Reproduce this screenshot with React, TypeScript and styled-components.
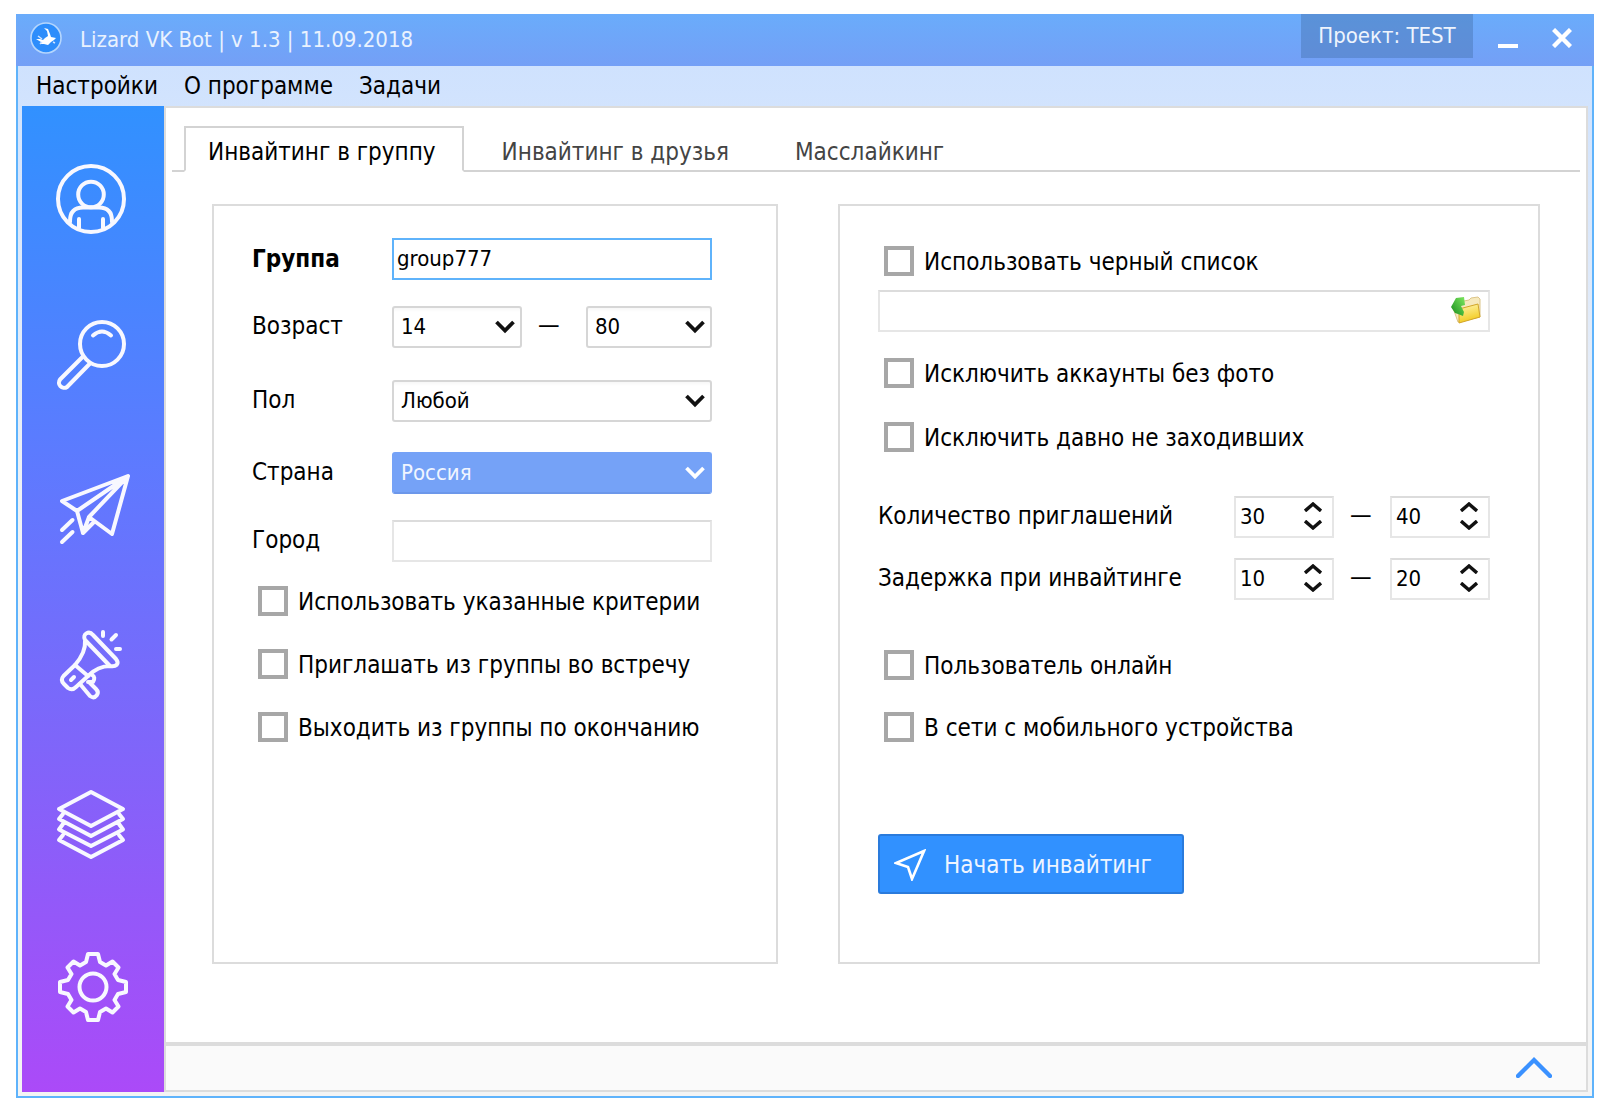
import React, { useState } from "react";
import styled, { createGlobalStyle, css } from "styled-components";

const GlobalStyle = createGlobalStyle`
  *, *::before, *::after { box-sizing: border-box; }
  body { margin: 0; background: #ffffff; }
  body, button, input, select {
    font-family: "DejaVu Sans Condensed", "DejaVu Sans", sans-serif;
    font-size: 24px;
    line-height: 32px;
    color: #000000;
  }
  button { border: 0; padding: 0; background: none; cursor: pointer; }
`;

const line = "#dcdcdc";
const accent = "#3191ff";
const frame = "#5fb3fb";

/* ---------- window shell ---------- */

const Desktop = styled.div`
  display: flex;
  min-height: 100vh;
  padding: 14px 18px 12px 16px;
`;

const Window = styled.div`
  flex: 1;
  display: flex;
  flex-direction: column;
  min-width: 0;
`;

const TitleBar = styled.header`
  display: flex;
  align-items: center;
  gap: 16px;
  height: 52px;
  padding: 0 13px 4px 14px;
  background: linear-gradient(#6aacfb, #749ff6);
  color: #ffffff;
`;

const Title = styled.h1`
  flex: 1;
  margin: 0;
  padding: 4px 0 0 2px;
  font-size: 22px;
  font-weight: 400;
  color: #e9f2fe;
`;

const Project = styled.button`
  align-self: flex-start;
  width: 172px;
  height: 44px;
  background: rgba(70, 115, 175, 0.45);
  color: #eef4fd;
  font-size: 22px;
`;

const WindowButton = styled.button`
  display: flex;
  align-items: center;
  justify-content: center;
  width: 38px;
  height: 44px;
`;

const Body = styled.div`
  flex: 1;
  display: flex;
  flex-direction: column;
  padding: 0 4px 4px;
  border: 2px solid ${frame};
  border-top: 0;
  background: linear-gradient(#cfe2fe, #f4f4f4 50%);
`;

const MenuBar = styled.nav`
  display: flex;
  align-items: center;
  gap: 26px;
  height: 40px;
  padding: 0 14px;
`;

const MenuItem = styled.button`
  white-space: nowrap;
`;

const Main = styled.div`
  flex: 1;
  display: flex;
`;

/* ---------- side bar ---------- */

const Sidebar = styled.nav`
  display: grid;
  grid-template-rows: 156px 154px 156px 160px 162px auto;
  justify-content: center;
  width: 142px;
  padding: 58px 4px 0 0;
  background: linear-gradient(#3191ff, #5c7bff 35%, #7e66fa 64%, #ab4af8);
`;

const SideButton = styled.button`
  display: flex;
  width: 70px;
  height: 70px;
`;

const OutlineSvg = styled.svg`
  overflow: visible;
`;

/* ---------- workspace ---------- */

const Workspace = styled.main`
  flex: 1;
  display: flex;
  flex-direction: column;
  min-width: 0;
  border: 2px solid ${line};
  background: #ffffff;
`;

const Tabs = styled.div`
  display: flex;
  gap: 14px;
  margin: 18px 6px 0;
  padding-left: 12px;
  border-bottom: 2px solid #d3d3d3;
`;

const Tab = styled.button<{ $active?: boolean }>`
  height: 46px;
  margin-bottom: -2px;
  padding: 6px 26px 0 22px;
  border: 2px solid transparent;
  color: #444444;
  white-space: nowrap;
  ${(p) =>
    p.$active &&
    css`
      border-color: #d3d3d3 #d3d3d3 #ffffff;
      background: #ffffff;
      color: #000000;
    `}
`;

const Columns = styled.div`
  flex: 1;
  display: grid;
  grid-template-columns: 566fr 702fr;
  gap: 60px;
  padding: 32px 46px 78px;
`;

const CriteriaPanel = styled.section`
  padding: 32px 64px 32px 38px;
  border: 2px solid ${line};
`;

const OptionsPanel = styled.section`
  padding: 40px 48px 40px 38px;
  border: 2px solid ${line};
`;

const Footer = styled.footer`
  display: flex;
  align-items: center;
  justify-content: flex-end;
  height: 48px;
  padding: 4px 34px 0 0;
  border-top: 4px solid ${line};
  background: #fafafa;
`;

/* ---------- form parts ---------- */

const Fields = styled.div`
  display: grid;
  grid-template-columns: 140px 1fr;
  grid-template-rows: 68px 74px 72px 68px 42px;
`;

const FieldLabel = styled.label<{ $bold?: boolean }>`
  line-height: ${(p) => (p.$bold ? 42 : 40)}px;
  font-weight: ${(p) => (p.$bold ? 700 : 400)};
`;

const boxed = css`
  width: 100%;
  height: 42px;
  outline: 0;
  font-size: 22px;
`;

const TextInput = styled.input<{ $focused?: boolean }>`
  ${boxed}
  padding: 0 3px 2px;
  border: 2px solid #e6e6e6;
  border-top-color: ${line};
  background: #ffffff;
  ${(p) => p.$focused && css`border-color: ${frame};`}
`;

const SelectBox = styled.div<{ $width?: number }>`
  position: relative;
  width: ${(p) => (p.$width ? `${p.$width}px` : "100%")};
  height: 42px;
`;

const NativeSelect = styled.select<{ $selected?: boolean }>`
  ${boxed}
  appearance: none;
  padding: 0 36px 0 7px;
  border: 2px solid #d6d6d6;
  border-radius: 3px;
  background: linear-gradient(#f7f7f7, #ffffff 4px);
  ${(p) =>
    p.$selected &&
    css`
      border-color: #75a2f7 #75a2f7 #6c97ea;
      background: #75a2f7;
      color: #f0f5ff;
    `}
`;

const SelectArrow = styled.svg`
  position: absolute;
  top: 13px;
  right: 7px;
  pointer-events: none;
`;

const Range = styled.div`
  display: grid;
  grid-template-columns: 130px 1fr 126px;
  line-height: 38px;
`;

const CheckList = styled.div<{ $gap: number }>`
  display: flex;
  flex-direction: column;
  gap: ${(p) => p.$gap}px;
  padding-left: 6px;
`;

const CriteriaChecks = styled(CheckList)`
  margin-top: 24px;
`;

const CheckLabel = styled.label`
  display: flex;
  align-items: flex-start;
  gap: 10px;
  height: 30px;
  line-height: 32px;
  white-space: nowrap;
`;

const CheckInput = styled.input`
  appearance: none;
  flex: none;
  width: 30px;
  height: 30px;
  margin: 0;
  border: 4px solid #a7a7a7;
  background: #ffffff;
  &:checked { background: ${accent}; box-shadow: inset 0 0 0 4px #ffffff; }
`;

const FileRow = styled.div`
  position: relative;
  margin: 14px 0 26px;
`;

const BrowseButton = styled.button`
  position: absolute;
  top: 6px;
  right: 8px;
  display: flex;
`;

const Amounts = styled.div`
  display: grid;
  gap: 20px;
  margin: 44px 0 50px;
`;

const AmountRow = styled.div`
  display: grid;
  grid-template-columns: 1fr 100px 56px 100px;
  height: 42px;
  line-height: 38px;
`;

const AmountLabel = styled.label`
  line-height: 40px;
`;

const Dash = styled.span`
  padding-left: 16px;
`;

const SpinBox = styled.div`
  display: flex;
  height: 42px;
  border: 2px solid #e6e6e6;
  border-top-color: ${line};
`;

const SpinInput = styled.input`
  flex: 1;
  width: 0;
  padding: 0 0 0 4px;
  border: 0;
  outline: 0;
  background: none;
  font-size: 22px;
  appearance: textfield;
  &::-webkit-inner-spin-button, &::-webkit-outer-spin-button { appearance: none; margin: 0; }
`;

const SpinButtons = styled.div`
  display: flex;
  flex-direction: column;
  gap: 8px;
  padding: 4px 10px 0 0;
`;

const SpinButton = styled.button`
  display: flex;
`;

const StartButton = styled.button`
  display: flex;
  align-items: center;
  gap: 18px;
  height: 60px;
  margin-top: 92px;
  padding: 2px 30px 0 14px;
  border: 2px solid #2a7bdc;
  border-radius: 3px;
  background: ${accent};
  color: #eef5ff;
`;

/* ---------- drawings ---------- */

const Outline = ({ shift = 0, children }: { shift?: number; children: React.ReactNode }) => (
  <OutlineSvg
    width="70"
    height="70"
    viewBox={`${-shift} 0 70 70`}
    fill="none"
    stroke="#f8f8ff"
    strokeWidth="4"
    strokeLinecap="round"
    strokeLinejoin="round"
    aria-hidden="true"
  >
    {children}
  </OutlineSvg>
);

const AccountIcon = () => (
  <Outline>
    <circle cx="35" cy="35" r="33" />
    <circle cx="35" cy="30.5" r="12.8" />
    <path d="M14 58v-1Q14 43.500 27 43.500H43Q56 43.500 56 57v1M23 55v9M47 55v9" />
  </Outline>
);

const SearchIcon = () => (
  <Outline>
    <circle cx="46" cy="24" r="22" />
    <path d="M37 15.500Q46 7.500 55 15.500" />
    <path d="M27 36.500L4 59.500A5.200 5.200 0 0 0 11 67L34 43.500" />
  </Outline>
);

const PlaneIcon = () => (
  <Outline shift={4}>
    <path d="M68 2L2 27L17 37L23 59L29 43L52 60ZM17 37L68 2L29 43M23 59L33 49" />
    <path d="M2 56L12.500 46M2 68L12.500 58" />
  </Outline>
);

const MegaphoneIcon = () => (
  <Outline shift={4}>
    <path d="M25 10C22 4 29 0 33 5L56 29C60 34 56 37 50 36ZM25 11Q26 22 15 35M50 36Q38 36 28 46" />
    <path d="M15 35L3.500 46Q0 50 4 54L8 58Q12 61 16 57L28 46ZM11 50L14 47" />
    <path d="M20 54L30 66Q34 69 37 65Q39 62 36 59L29 52M32 45Q36 47 33 52L28 52" />
    <path d="M43 2V6M56 5L51.500 9.500M56 19H60" />
  </Outline>
);

const LayersIcon = () => (
  <Outline>
    <path d="M35 2L67 19L35 36L3 19Z" />
    <path d="M7 24L3 29L35 46L67 29L63 24M7 34L3 39.500L35 56L67 39.500L63 34M7 45L3 50L35 67L67 50L63 45" />
  </Outline>
);

const gearQuarter: [number, number][] = [
  [30, 2], [40, 2], [42, 10], [48, 13.5], [54.5, 9.5], [60.5, 15.5], [56.5, 22], [60, 28],
];

const gearPath = () => {
  const points: string[] = [];
  let quarter = gearQuarter;
  for (let i = 0; i < 4; i += 1) {
    quarter.forEach(([x, y]) => points.push(`${x} ${y}`));
    quarter = quarter.map(([x, y]) => [70 - y, x] as [number, number]);
  }
  return `M${points.join("L")}Z`;
};

const GearIcon = () => (
  <Outline shift={2}>
    <path d={gearPath()} />
    <circle cx="35" cy="35" r="13.500" />
  </Outline>
);

const LogoIcon = () => (
  <svg width="32" height="32" viewBox="0 0 32 32" aria-hidden="true">
    <circle cx="16" cy="16" r="15" fill="#2d8dfb" stroke="#b5d6fd" strokeWidth="1.600" />
    <path
      d="M14 6L18 7L20 12L21 15L26 16L24 18L21 20L18 23L14 22L10 22L11 20L6 17L10 17L13 18L15 16L18 14L17 9Z"
      fill="#ffffff"
    />
    <path d="M8 14L12 17M23 20L25 21M10 22L12 20" stroke="#cfe4ff" strokeWidth="1.500" />
  </svg>
);

const Chevron = ({ color = "#111111" }: { color?: string }) => (
  <SelectArrow width="20" height="16" viewBox="0 0 20 16" fill="none" stroke={color} strokeWidth="3.800">
    <path d="M1.500 3L10 11.500L18.500 3" />
  </SelectArrow>
);

const SpinArrow = ({ up }: { up?: boolean }) => (
  <svg width="18" height="10" viewBox="0 0 18 10" fill="none" stroke="#111111" strokeWidth="3.400">
    <path d={up ? "M1 9L9 2L17 9" : "M1 1L9 8L17 1"} />
  </svg>
);

const FolderIcon = () => (
  <svg width="32" height="28" viewBox="0 0 32 28" aria-hidden="true">
    <defs>
      <linearGradient id="folder" x1="0" y1="0" x2="0.300" y2="1">
        <stop offset="0" stopColor="#fff6b0" />
        <stop offset="1" stopColor="#f3cb1f" />
      </linearGradient>
      <linearGradient id="arrow" x1="1" y1="0" x2="0" y2="1">
        <stop offset="0" stopColor="#7fe860" />
        <stop offset="1" stopColor="#158a1c" />
      </linearGradient>
    </defs>
    <path d="M14 5L19 4L21 2L28 1L30 3L30 21L8 26L3 12Z" fill="#f6e9bd" stroke="#dcc58a" />
    <path d="M9 13L28 8L30 21L9 27Z" fill="url(#folder)" stroke="#d2a52a" />
    <path d="M1 11L6 2L14 1L15 9L11 10L14 16L13 20L8 18L5 17Z" fill="url(#arrow)" />
  </svg>
);

const SendIcon = () => (
  <svg width="32" height="32" viewBox="0 0 32 32" fill="none" stroke="#ffffff" strokeWidth="2.600" aria-hidden="true">
    <path d="M30 2L2 14L14 18L18 30Z" />
  </svg>
);

/* ---------- composed controls ---------- */

type SelectProps = { id?: string; name: string; options: string[]; selected?: boolean };

const Select = ({ id, name, options, selected }: SelectProps) => (
  <SelectBox>
    <NativeSelect id={id} aria-label={name} $selected={selected}>
      {options.map((o) => (
        <option key={o}>{o}</option>
      ))}
    </NativeSelect>
    <Chevron color={selected ? "#ffffff" : undefined} />
  </SelectBox>
);

const Check = ({ children }: { children: string }) => (
  <CheckLabel>
    <CheckInput type="checkbox" />
    {children}
  </CheckLabel>
);

const Spin = ({ id, name, initial }: { id?: string; name: string; initial: number }) => {
  const [value, setValue] = useState(initial);
  return (
    <SpinBox>
      <SpinInput
        id={id}
        type="number"
        aria-label={name}
        value={value}
        onChange={(e) => setValue(Number(e.target.value))}
      />
      <SpinButtons>
        <SpinButton type="button" aria-label="Больше" onClick={() => setValue(value + 1)}>
          <SpinArrow up />
        </SpinButton>
        <SpinButton type="button" aria-label="Меньше" onClick={() => setValue(value - 1)}>
          <SpinArrow />
        </SpinButton>
      </SpinButtons>
    </SpinBox>
  );
};

const AmountRange = ({ id, label, from, to }: { id: string; label: string; from: number; to: number }) => (
  <AmountRow>
    <AmountLabel htmlFor={id}>{label}</AmountLabel>
    <Spin id={id} name={`${label}: от`} initial={from} />
    <Dash>—</Dash>
    <Spin name={`${label}: до`} initial={to} />
  </AmountRow>
);

const sections = [
  { name: "Аккаунты", Icon: AccountIcon },
  { name: "Поиск", Icon: SearchIcon },
  { name: "Рассылка", Icon: PlaneIcon },
  { name: "Продвижение", Icon: MegaphoneIcon },
  { name: "Слои", Icon: LayersIcon },
  { name: "Параметры", Icon: GearIcon },
];

const tabs = ["Инвайтинг в группу", "Инвайтинг в друзья", "Масслайкинг"];

export default function App() {
  const [tab, setTab] = useState(0);
  const [group, setGroup] = useState("group777");

  return (
    <Desktop>
      <GlobalStyle />
      <Window>
        <TitleBar>
          <LogoIcon />
          <Title>Lizard VK Bot | v 1.3 | 11.09.2018</Title>
          <Project type="button">Проект: TEST</Project>
          <WindowButton type="button" aria-label="Свернуть">
            <svg width="20" height="20" viewBox="0 0 20 20">
              <path d="M0 18H20" stroke="#ffffff" strokeWidth="4" />
            </svg>
          </WindowButton>
          <WindowButton type="button" aria-label="Закрыть">
            <svg width="20" height="20" viewBox="0 0 20 20">
              <path d="M1.500 1.500L18.500 18.500M18.500 1.500L1.500 18.500" stroke="#ffffff" strokeWidth="4.400" />
            </svg>
          </WindowButton>
        </TitleBar>
        <Body>
          <MenuBar>
            <MenuItem type="button">Настройки</MenuItem>
            <MenuItem type="button">О программе</MenuItem>
            <MenuItem type="button">Задачи</MenuItem>
          </MenuBar>
          <Main>
            <Sidebar>
              {sections.map(({ name, Icon }) => (
                <SideButton key={name} type="button" aria-label={name}>
                  <Icon />
                </SideButton>
              ))}
            </Sidebar>
            <Workspace>
              <Tabs role="tablist">
                {tabs.map((name, i) => (
                  <Tab
                    key={name}
                    type="button"
                    role="tab"
                    aria-selected={i === tab}
                    $active={i === tab}
                    onClick={() => setTab(i)}
                  >
                    {name}
                  </Tab>
                ))}
              </Tabs>
              <Columns>
                <CriteriaPanel>
                  <Fields>
                    <FieldLabel htmlFor="group" $bold>Группа</FieldLabel>
                    <TextInput id="group" value={group} onChange={(e) => setGroup(e.target.value)} $focused />
                    <FieldLabel htmlFor="age">Возраст</FieldLabel>
                    <Range>
                      <Select id="age" name="Возраст: от" options={["14", "18", "25"]} />
                      <Dash>—</Dash>
                      <Select name="Возраст: до" options={["80", "60", "40"]} />
                    </Range>
                    <FieldLabel htmlFor="sex">Пол</FieldLabel>
                    <Select id="sex" name="Пол" options={["Любой", "Мужской", "Женский"]} />
                    <FieldLabel htmlFor="country">Страна</FieldLabel>
                    <Select id="country" name="Страна" options={["Россия", "Украина", "Беларусь"]} selected />
                    <FieldLabel htmlFor="city">Город</FieldLabel>
                    <TextInput id="city" />
                  </Fields>
                  <CriteriaChecks $gap={33}>
                    <Check>Использовать указанные критерии</Check>
                    <Check>Приглашать из группы во встречу</Check>
                    <Check>Выходить из группы по окончанию</Check>
                  </CriteriaChecks>
                </CriteriaPanel>
                <OptionsPanel>
                  <CheckList $gap={32}>
                    <Check>Использовать черный список</Check>
                  </CheckList>
                  <FileRow>
                    <TextInput aria-label="Файл черного списка" />
                    <BrowseButton type="button" aria-label="Выбрать файл">
                      <FolderIcon />
                    </BrowseButton>
                  </FileRow>
                  <CheckList $gap={34}>
                    <Check>Исключить аккаунты без фото</Check>
                    <Check>Исключить давно не заходивших</Check>
                  </CheckList>
                  <Amounts>
                    <AmountRange id="invites" label="Количество приглашений" from={30} to={40} />
                    <AmountRange id="delay" label="Задержка при инвайтинге" from={10} to={20} />
                  </Amounts>
                  <CheckList $gap={32}>
                    <Check>Пользователь онлайн</Check>
                    <Check>В сети с мобильного устройства</Check>
                  </CheckList>
                  <StartButton type="button">
                    <SendIcon />
                    Начать инвайтинг
                  </StartButton>
                </OptionsPanel>
              </Columns>
              <Footer>
                <button type="button" aria-label="Показать журнал">
                  <svg width="36" height="22" viewBox="0 0 36 22" fill="none" stroke="#3a91ff" strokeWidth="4.400">
                    <path d="M2 20L18 4L34 20" strokeLinecap="round" />
                  </svg>
                </button>
              </Footer>
            </Workspace>
          </Main>
        </Body>
      </Window>
    </Desktop>
  );
}
